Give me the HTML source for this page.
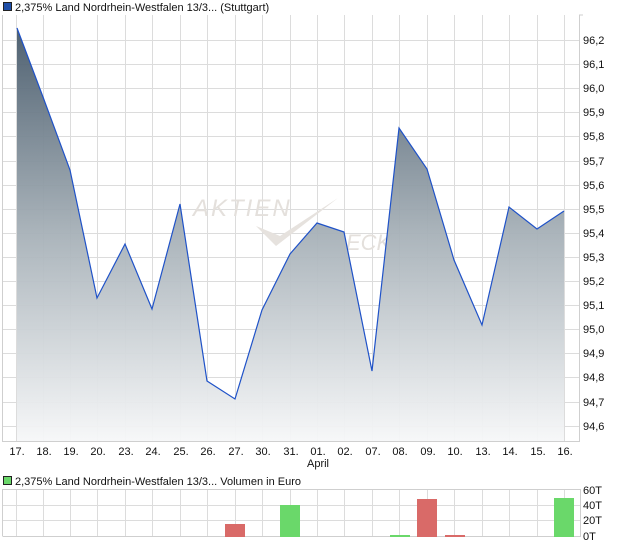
<!DOCTYPE html>
<html><head><meta charset="utf-8"><style>
body{margin:0;background:#fff;width:620px;height:546px;overflow:hidden}
svg text{font-family:"Liberation Sans",sans-serif;font-size:11px;fill:#111}
</style></head><body>
<svg width="620" height="546" viewBox="0 0 620 546" xmlns="http://www.w3.org/2000/svg">
<defs><linearGradient id="g" x1="0" y1="0" x2="0" y2="1">
<stop offset="0" stop-color="#46596a"/><stop offset="0.5" stop-color="#a7b1b8"/><stop offset="1" stop-color="#f6f7f8"/></linearGradient></defs>
<rect x="3.5" y="2.5" width="8" height="8" fill="#1f4fa8" stroke="#222" stroke-width="1"/>
<text x="15" y="11">2,375% Land Nordrhein-Westfalen 13/3... (Stuttgart)</text>
<g stroke="#dcdcdc" stroke-width="1">
<path d="M16.5 15V441M43.5 15V441M70.5 15V441M97.5 15V441M125.5 15V441M152.5 15V441M180.5 15V441M207.5 15V441M235.5 15V441M262.5 15V441M290.5 15V441M317.5 15V441M344.5 15V441M372.5 15V441M399.5 15V441M427.5 15V441M454.5 15V441M482.5 15V441M509.5 15V441M537.5 15V441M564.5 15V441"/>
<path d="M2 40.5H579M2 64.5H579M2 88.5H579M2 112.5H579M2 136.5H579M2 161.5H579M2 185.5H579M2 209.5H579M2 233.5H579M2 257.5H579M2 281.5H579M2 305.5H579M2 329.5H579M2 353.5H579M2 377.5H579M2 402.5H579M2 426.5H579"/>
</g>
<text x="193" y="216" style="font-size:24px;font-style:italic;fill:#e4e0dc;letter-spacing:2px">AKTIEN</text>
<path d="M256 226L276 246L338 198L280 236Z" fill="#e6e2de"/>
<text x="346" y="250" style="font-size:22px;font-style:italic;fill:#e4e0dc">ECK</text>
<path d="M17 28L43 97L70 170L97 298L125 244L152 309L180 204L207 381L235 399L262 310L290 254L317 223L344 232L372 371L399 128L427 169L454 260L482 325L509 207L537 229L564 211L564 441L17 441Z" fill="url(#g)" opacity="0.95"/>
<path d="M17 28L43 97L70 170L97 298L125 244L152 309L180 204L207 381L235 399L262 310L290 254L317 223L344 232L372 371L399 128L427 169L454 260L482 325L509 207L537 229L564 211" fill="none" stroke="#1f52c8" stroke-width="1.2"/>
<path d="M2.5 15V441.5H579.5V15" fill="none" stroke="#cfcfcf"/>
<path d="M579 15H583" stroke="#cfcfcf"/>
<g>
<text x="583" y="44">96,2</text><text x="583" y="68">96,1</text><text x="583" y="92">96,0</text><text x="583" y="116">95,9</text><text x="583" y="140">95,8</text><text x="583" y="165">95,7</text><text x="583" y="189">95,6</text><text x="583" y="213">95,5</text><text x="583" y="237">95,4</text><text x="583" y="261">95,3</text><text x="583" y="285">95,2</text><text x="583" y="309">95,1</text><text x="583" y="333">95,0</text><text x="583" y="357">94,9</text><text x="583" y="381">94,8</text><text x="583" y="406">94,7</text><text x="583" y="430">94,6</text>
</g>
<g text-anchor="middle">
<text x="17" y="455">17.</text><text x="44" y="455">18.</text><text x="71" y="455">19.</text><text x="98" y="455">20.</text><text x="126" y="455">23.</text><text x="153" y="455">24.</text><text x="181" y="455">25.</text><text x="208" y="455">26.</text><text x="236" y="455">27.</text><text x="263" y="455">30.</text><text x="291" y="455">31.</text><text x="318" y="455">01.</text><text x="345" y="455">02.</text><text x="373" y="455">07.</text><text x="400" y="455">08.</text><text x="428" y="455">09.</text><text x="455" y="455">10.</text><text x="483" y="455">13.</text><text x="510" y="455">14.</text><text x="538" y="455">15.</text><text x="565" y="455">16.</text>
<text x="318" y="467">April</text>
</g>
<rect x="3.5" y="476.5" width="8" height="8" fill="#6ad86a" stroke="#222"/>
<text x="15" y="485">2,375% Land Nordrhein-Westfalen 13/3... Volumen in Euro</text>
<g stroke="#dcdcdc">
<path d="M16.5 489V536M43.5 489V536M70.5 489V536M97.5 489V536M125.5 489V536M152.5 489V536M180.5 489V536M207.5 489V536M235.5 489V536M262.5 489V536M290.5 489V536M317.5 489V536M344.5 489V536M372.5 489V536M399.5 489V536M427.5 489V536M454.5 489V536M482.5 489V536M509.5 489V536M537.5 489V536M564.5 489V536"/>
<path d="M2 505.5H580M2 520.5H580"/>
</g>
<path d="M2.5 536V489.5H580.5V536.5H2.5" fill="none" stroke="#cfcfcf"/>
<rect x="225" y="524" width="20" height="13" fill="#d96a68"/>
<rect x="280" y="505" width="20" height="32" fill="#6ad86a"/>
<rect x="390" y="535" width="20" height="2" fill="#6ad86a"/>
<rect x="417" y="499" width="20" height="38" fill="#d96a68"/>
<rect x="445" y="535" width="20" height="2" fill="#d96a68"/>
<rect x="554" y="498" width="20" height="39" fill="#6ad86a"/>
<text x="583" y="494">60T</text><text x="583" y="509">40T</text><text x="583" y="524">20T</text><text x="583" y="540">0T</text>
</svg>
</body></html>
